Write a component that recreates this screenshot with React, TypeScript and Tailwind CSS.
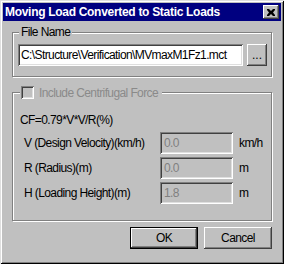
const raised = "shadow-[inset_-1px_-1px_#404040,inset_1px_1px_#ffffff,inset_-2px_-2px_#808080]";
const sunken = "shadow-[inset_1px_1px_#808080,inset_-1px_-1px_#ffffff,inset_2px_2px_#404040,inset_-2px_-2px_#dfdfdf]";
const etched = "border border-[#808080] shadow-[inset_1px_1px_#ffffff,1px_1px_#ffffff]";

const Field = ({ label, value, unit }: { label: string; value: string; unit: string }) => (
  <div className="flex items-center h-[22px] whitespace-nowrap">
    <span className="w-[147px] shrink-0 pl-[11px]">{label}</span>
    <div className={`w-[73px] h-[22px] shrink-0 pl-[4px] flex items-center text-[#808080] ${sunken}`}>{value}</div>
    <span className="pl-[6px]">{unit}</span>
  </div>
);

export default function App() {
  return (
    <div
      className="w-[284px] h-[264px] bg-[#c0c0c0] p-[3px] flex flex-col text-[12px] tracking-[-0.6px] text-black whitespace-nowrap shadow-[inset_1px_1px_#dfdfdf,inset_-1px_-1px_#000000,inset_2px_2px_#ffffff,inset_-2px_-2px_#808080]"
      style={{ fontFamily: '"Liberation Sans", Arial, sans-serif' }}
    >
      {/* title bar */}
      <div className="h-[18px] bg-[#000080] flex items-center justify-between pl-[2px] pr-[2px]">
        <span className="text-white font-bold text-[12px] tracking-[-0.3px]">
          Moving Load Converted to Static Loads
        </span>
        <div className={`w-[16px] h-[14px] bg-[#c0c0c0] flex items-center justify-center ${raised}`}>
          <svg width="8" height="7" viewBox="0 0 8 7">
            <path d="M0 0h2l2 2 2-2h2v1l-2 2.5 2 2.5v1h-2l-2-2-2 2h-2v-1l2-2.5-2-2.5z" fill="#000" />
          </svg>
        </div>
      </div>

      <div className="flex flex-col px-[9px] pt-[11px]">
        {/* file name group */}
        <div className={`relative h-[45px] ${etched} flex items-center gap-[4px] px-[5px] pt-[1px]`}>
          <span className="absolute left-[6px] -top-[9px] bg-[#c0c0c0] px-[2px] leading-[16px]">File Name</span>
          <div className={`w-[225px] h-[22px] shrink-0 bg-white flex items-center pl-[3px] overflow-hidden ${sunken}`}>
            C:\Structure\Verification\MVmaxM1Fz1.mct
          </div>
          <div className={`w-[20px] h-[22px] shrink-0 flex items-center justify-center tracking-normal ${raised}`}>...</div>
        </div>

        {/* centrifugal group */}
        <div className={`relative mt-[15px] h-[129px] ${etched} flex flex-col pt-[18px] pl-[7px]`}>
          <div className="absolute left-[7px] -top-[7px] h-[13px] bg-[#c0c0c0] flex items-center gap-[5px] pl-[1px] pr-[4px]">
            <div className={`w-[13px] h-[13px] ${sunken}`} />
            <span className="text-[#8a8a8a] leading-[16px]">Include Centrifugal Force</span>
          </div>
          <div className="h-[18px] flex items-center">CF=0.79*V*V/R(%)</div>
          <div className="flex flex-col gap-[3px] mt-[3px] -ml-[7px]">
            <Field label="V (Design Velocity)(km/h)" value="0.0" unit="km/h" />
            <Field label="R (Radius)(m)" value="0.0" unit="m" />
            <Field label="H (Loading Height)(m)" value="1.8" unit="m" />
          </div>
        </div>

        {/* buttons */}
        <div className="flex justify-end gap-[6px] mt-[6px]">
          <div className="w-[68px] h-[22px] border border-black flex">
            <div className={`w-full h-full flex items-center justify-center ${raised}`}>OK</div>
          </div>
          <div className={`w-[68px] h-[22px] flex items-center justify-center ${raised}`}>Cancel</div>
        </div>
      </div>
    </div>
  );
}
